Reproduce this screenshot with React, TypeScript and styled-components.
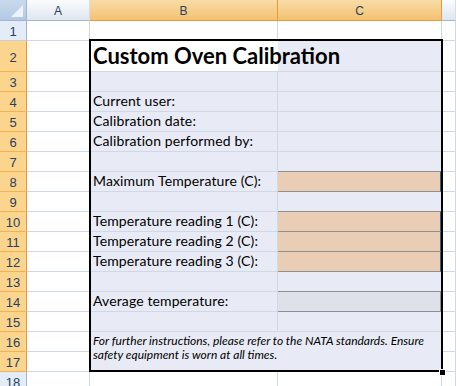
import React from 'react';
import styled, { createGlobalStyle, css } from 'styled-components';

const GlobalStyle = createGlobalStyle`
  html, body {
    margin: 0;
    padding: 0;
    background: #ffffff;
  }
  body {
    width: 456px;
    height: 386px;
    overflow: hidden;
    font-family: Lato, "Open Sans", sans-serif;
  }
`;

const GRID = '#d0d7e5';
const FILL = '#e8ebf5';

const Sheet = styled.div`
  display: grid;
  grid-template-columns: 27px 63px 188px 164px 1fr;
  grid-template-rows: 21px 20px 31px repeat(16, 20px);
  width: 456px;
  height: 386px;
  overflow: hidden;
`;

const Corner = styled.div`
  position: relative;
  background: linear-gradient(#c9daee, #b2c8e4);
  border-right: 1px solid #9eb6ce;
  border-bottom: 1px solid #9eb6ce;

  &::after {
    content: '';
    position: absolute;
    right: 3px;
    bottom: 3px;
    border-left: 12px solid transparent;
    border-bottom: 12px solid #eef3f9;
  }
`;

const headerText = css`
  display: flex;
  align-items: center;
  justify-content: center;
  font-family: "Liberation Sans", Arial, sans-serif;
  font-size: 12px;
  color: #27415f;
`;

const ColHeader = styled.div<{ $active?: boolean }>`
  ${headerText}
  padding-top: 1px;
  background: ${(p) =>
    p.$active
      ? 'linear-gradient(#f9dca6, #f3c272)'
      : 'linear-gradient(#fbfcfe, #dfe6ef)'};
  border-right: 1px solid ${(p) => (p.$active ? '#f29536' : '#d5dde8')};
  border-bottom: 1px solid ${(p) => (p.$active ? '#f29536' : '#9eb6ce')};
`;

const RowHeader = styled.div<{ $active?: boolean }>`
  ${headerText}
  font-size: 13px;
  padding-top: 2px;
  background: ${(p) => (p.$active ? '#fbd48e' : '#e4ecf7')};
  border-right: 1px solid ${(p) => (p.$active ? '#f29536' : '#9eb6ce')};
  border-bottom: 1px solid ${(p) => (p.$active ? '#f5b04f' : '#c5d1e0')};
`;

const Cell = styled.div`
  border-right: 1px solid ${GRID};
  border-bottom: 1px solid ${GRID};
`;

const Box = styled.div`
  grid-column: 3 / 5;
  grid-row: 3 / 19;
  margin: -2px -1px 0 -1px;
  border: 2px solid #000000;
  background: ${FILL};
  position: relative;
  display: grid;
  grid-template-columns: 187px 1fr;
  grid-template-rows: 31px repeat(13, 20px) 1fr;
  color: #000000;
`;

const Label = styled.div`
  position: relative;
  z-index: 1;
  display: flex;
  align-items: flex-end;
  padding: 0 0 2px 2px;
  white-space: nowrap;
  font-size: 14px;
  letter-spacing: 0.12px;
  line-height: 16px;
  border-right: 1px solid ${GRID};
  border-bottom: 1px solid ${GRID};
`;

const Title = styled(Label)`
  background: #ffffff;
  border-right: none;
  font-size: 22px;
  font-weight: 700;
  letter-spacing: 0;
  line-height: 26px;
  padding-bottom: 2px;
`;

const Value = styled.div<{ $kind?: 'input' | 'output' }>`
  border-bottom: 1px solid ${GRID};
  ${(p) =>
    p.$kind &&
    css`
      margin: -1px 0 0 -1px;
      border: 1px solid #909090;
      border-right-color: ${p.$kind === 'input' ? '#3b5a80' : '#909090'};
      background: ${p.$kind === 'input' ? '#e9cdb4' : '#dfe1ea'};
    `}
`;

const Note = styled.div`
  grid-column: 1 / -1;
  padding: 2px 0 0 2px;
  font-size: 12px;
  font-style: italic;
  line-height: 14px;
`;

const FillHandle = styled.div`
  position: absolute;
  right: -4px;
  bottom: -5px;
  width: 5px;
  height: 5px;
  background: #000000;
  outline: 1px solid #ffffff;
`;

type Row = { label?: string; kind?: 'input' | 'output' };

const rows: Row[] = [
  {},
  { label: 'Current user:' },
  { label: 'Calibration date:' },
  { label: 'Calibration performed by:' },
  {},
  { label: 'Maximum Temperature (C):', kind: 'input' },
  {},
  { label: 'Temperature reading 1 (C):', kind: 'input' },
  { label: 'Temperature reading 2 (C):', kind: 'input' },
  { label: 'Temperature reading 3 (C):', kind: 'input' },
  {},
  { label: 'Average temperature:', kind: 'output' },
  {},
];

export default function App() {
  const sheetRows = Array.from({ length: 18 }, (_, i) => i + 1);

  return (
    <>
      <GlobalStyle />
      <Sheet>
        <Corner />
        <ColHeader>A</ColHeader>
        <ColHeader $active>B</ColHeader>
        <ColHeader $active>C</ColHeader>
        <ColHeader />

        <Box>
          <Title>Custom Oven Calibration</Title>
          <Value />
          {rows.map((r, i) => (
            <React.Fragment key={i}>
              <Label>{r.label}</Label>
              <Value $kind={r.kind} />
            </React.Fragment>
          ))}
          <Note>
            For further instructions, please refer to the NATA standards. Ensure
            <br />
            safety equipment is worn at all times.
          </Note>
          <FillHandle />
        </Box>

        {sheetRows.map((n) => {
          const active = n >= 2 && n <= 17;
          return (
            <React.Fragment key={n}>
              <RowHeader $active={active}>{n}</RowHeader>
              <Cell />
              {!active && (
                <>
                  <Cell />
                  <Cell />
                </>
              )}
              <Cell />
            </React.Fragment>
          );
        })}
      </Sheet>
    </>
  );
}
